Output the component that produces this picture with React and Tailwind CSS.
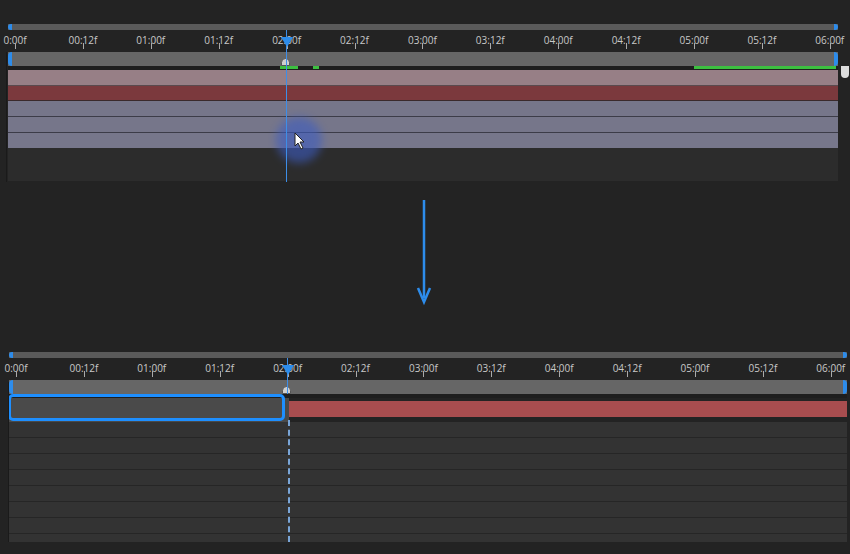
const labels = ["0:00f","00:12f","01:00f","01:12f","02:00f","02:12f","03:00f","03:12f","04:00f","04:12f","05:00f","05:12f","06:00f"];

function Ruler({ h = 22 }) {
  return (
    <div className="relative bg-[#232323]" style={{ height: h }}>
      {labels.map((l, i) => {
        const x = 7 + i * 67.9;
        return (
          <div key={i} className="absolute top-0" style={{ left: x }}>
            <div className="absolute top-[3px] -translate-x-1/2 text-[10px] text-[#c8c8c8] whitespace-nowrap" style={{ fontFamily: "'Open Sans', sans-serif" }}>{l}</div>
            <div className="absolute top-[13px] w-px h-[6px] bg-[#aaa]" />
          </div>
        );
      })}
    </div>
  );
}

function Scroll() {
  return (
    <div className="h-[6px] bg-[#5a5a5a] flex justify-between">
      <div className="w-[4px] h-full bg-[#2d8ceb] rounded-l" />
      <div className="w-[4px] h-full bg-[#2d8ceb] rounded-r" />
    </div>
  );
}

function Work({ green }) {
  return (
    <div className="relative h-[14px] bg-[#666] flex justify-between border-b-4 border-[#1e1e1e] box-content">
      <div className="w-[4px] h-full bg-[#2d8ceb] rounded-l" />
      <div className="w-[4px] h-full bg-[#2d8ceb] rounded-r" />
      {green && (
        <>
          <div className="absolute left-[272px] top-[14px] w-[18px] h-[3px] bg-[#3cc040]" />
          <div className="absolute left-[305px] top-[14px] w-[6px] h-[3px] bg-[#3cc040]" />
          <div className="absolute left-[686px] top-[14px] w-[142px] h-[3px] bg-[#3cc040]" />
        </>
      )}
      <div className="absolute left-[273px] top-[6px] w-[9px] h-[8px] rounded-t-full bg-[#cfcfcf] border border-[#555]" />
    </div>
  );
}

export default function App() {
  return (
    <div className="w-[850px] h-[554px] bg-[#232323] overflow-hidden relative" style={{ fontFamily: "'Open Sans', sans-serif" }}>
      <div className="pt-[24px] flex">
        <div className="w-[8px] shrink-0" />
        <div className="w-[830px] relative">
          <Scroll />
          <Ruler />
          <Work green />
          <div className="flex flex-col">
            <div className="h-[16px] bg-[#977f86] border-b border-[#5a4a4e]" />
            <div className="h-[15px] bg-[#7b393d] border-b border-[#3a2a2c]" />
            <div className="h-[16px] bg-[#76768a] border-b border-[#3c3c48]" />
            <div className="h-[16px] bg-[#76768a] border-b border-[#3c3c48]" />
            <div className="h-[15px] bg-[#77778b]" />
            <div className="h-[33px] bg-[#2c2c2c]" />
          </div>
          <div className="absolute left-[268px] top-[93px] w-[46px] h-[46px] rounded-full bg-[#3d5cc0] opacity-60 blur-[4px]" />
          <div className="absolute left-[278px] top-[6px] w-px h-[152px] bg-[#3d8ee8]" />
          <div className="absolute left-[273px] top-[13px] w-0 h-0 border-l-[6px] border-r-[6px] border-t-[10px] border-l-transparent border-r-transparent border-t-[#2d8ceb]" />
          <svg className="absolute left-[286px] top-[108px]" width="12" height="18" viewBox="0 0 12 18">
            <path d="M1 1 L1 14 L4 11 L7 17 L9 16 L6 10 L10 10 Z" fill="#fff" stroke="#222" strokeWidth="1" />
          </svg>
        </div>
        <div className="w-[12px] relative">
          <div className="absolute left-[3px] top-[42px] w-[8px] h-[12px] bg-[#ddd] rounded-b" />
        </div>
      </div>
      <div className="absolute left-[6px] top-[52px] w-px h-[130px] bg-[#1a1a1a]" />

      <svg className="absolute left-[416px] top-[198px]" width="16" height="108" viewBox="0 0 16 108">
        <line x1="8" y1="2" x2="8" y2="100" stroke="#2d8ceb" strokeWidth="2.5" />
        <path d="M2 90 L8 104 L14 90" fill="none" stroke="#2d8ceb" strokeWidth="2.5" />
      </svg>

      <div className="absolute left-0 top-[352px] flex">
        <div className="w-[9px] shrink-0" />
        <div className="w-[838px] relative">
          <Scroll />
          <Ruler />
          <Work />
          <div className="flex h-[24px] items-stretch">
            <div className="w-[280px] bg-[#4a4a4a]" />
            <div className="flex-1 bg-[#a84d4f] mt-[3px] mb-[5px]" />
          </div>
          <div className="flex flex-col">
            {Array.from({ length: 7 }).map((_, i) => (
              <div key={i} className="h-[16px] bg-[#333] border-b border-[#262626]" />
            ))}
            <div className="h-[8px] bg-[#333]" />
          </div>
          <div className="absolute left-[-1px] top-[42px] w-[277px] h-[27px] rounded-[5px] border-[3px] border-[#1e8fff]" />
          <div className="absolute left-[278px] top-[6px] w-px h-[36px] bg-[#3d8ee8]" />
          <div className="absolute left-[279px] top-[68px] w-0 h-[122px] border-l-2 border-dashed border-[#7aa6d8]" />
          <div className="absolute left-[273px] top-[13px] w-0 h-0 border-l-[6px] border-r-[6px] border-t-[10px] border-l-transparent border-r-transparent border-t-[#2d8ceb]" />
        </div>
      </div>
      <div className="absolute left-[8px] top-[382px] w-px h-[160px] bg-[#1a1a1a]" />
    </div>
  );
}
